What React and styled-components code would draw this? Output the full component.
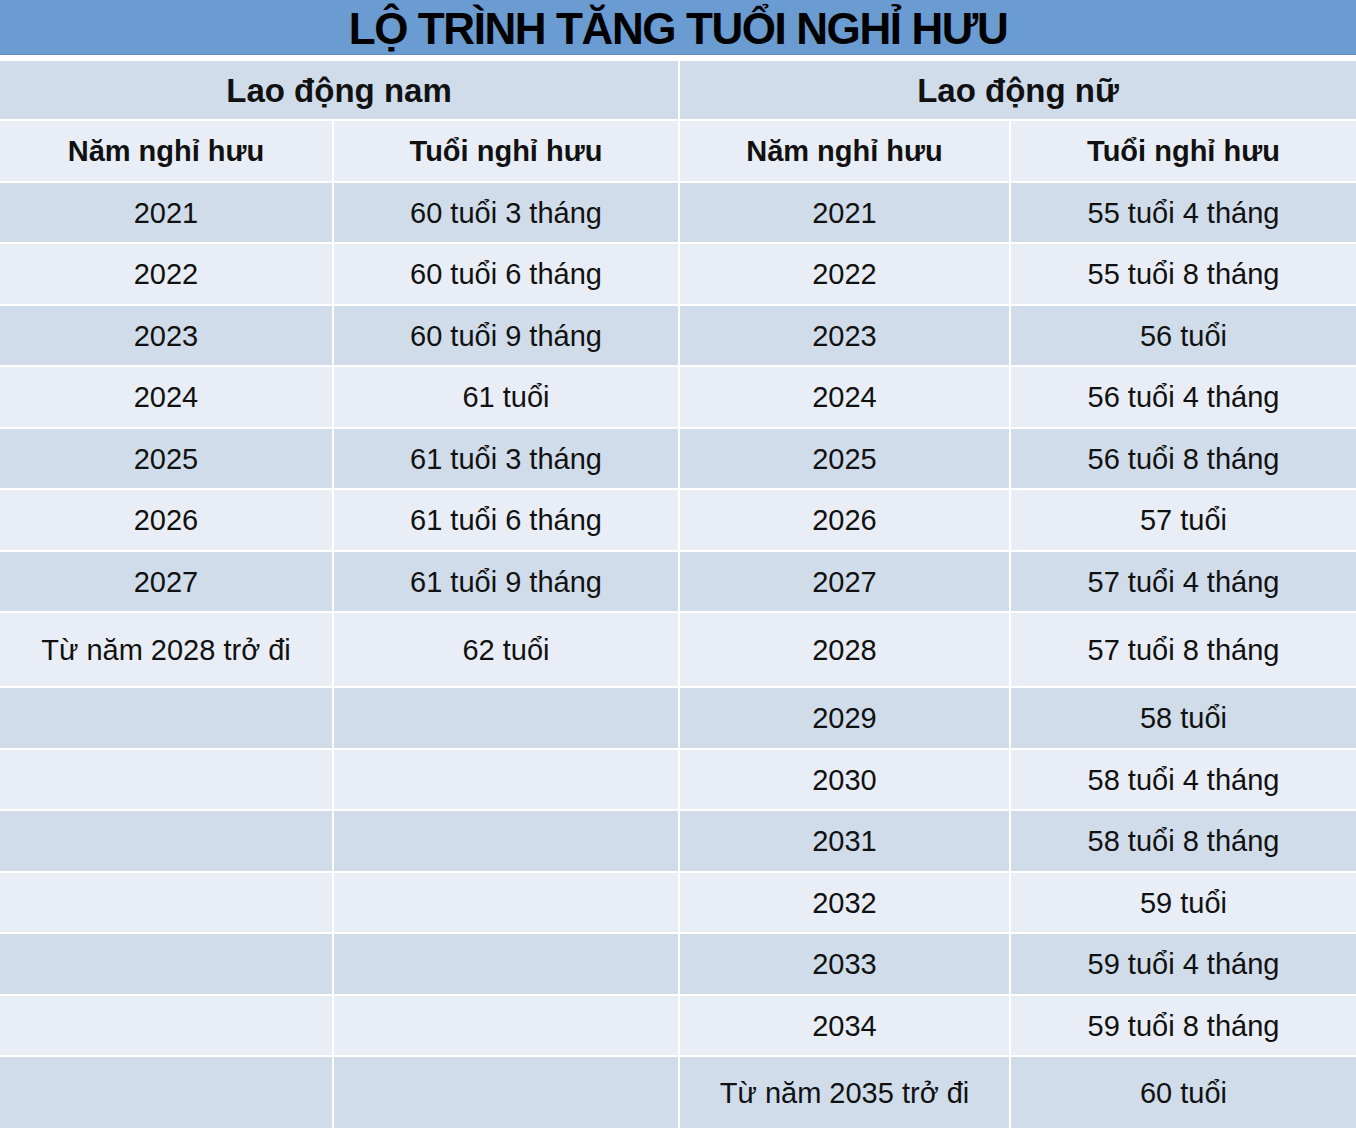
import React from "react";
import styled, { createGlobalStyle } from "styled-components";

const GlobalStyle = createGlobalStyle`
    html, body {
        margin: 0;
        padding: 0;
        background: #ffffff;
    }
    body {
        font-family: "Liberation Sans", Arial, sans-serif;
        color: #111;
    }
`;

const ScPage = styled.div`
    width: 1356px;
    height: 1128px;
    overflow: hidden;
    background: #ffffff;
`;

const ScTitle = styled.h1`
    margin: 0 0 6px;
    height: 55px;
    display: flex;
    align-items: center;
    justify-content: center;
    background: #6a9bd1;
    border-bottom: 1px solid #5f8fc4;
    box-sizing: border-box;
    font-size: 44px;
    font-weight: 700;
    letter-spacing: -1.4px;
    color: #000;
    padding-top: 3px;
`;

const ScGrid = styled.div`
    display: grid;
    grid-template-columns: 332px 344px 329px 345px;
    grid-template-rows: 58px repeat(8, 59.5px) 73px repeat(6, 59.5px) 71px;
    gap: 2px;
`;

const ScCell = styled.div`
    display: flex;
    align-items: center;
    justify-content: center;
    box-sizing: border-box;
    padding-top: 2px;
    background: ${({ $dark }) => ($dark ? "#d0dcea" : "#e9eef6")};
    grid-column: ${({ $span }) => ($span ? `span ${$span}` : "auto")};
    font-size: ${({ $size }) => $size || 29}px;
    font-weight: ${({ $bold }) => ($bold ? 700 : 400)};
    color: #111;
    white-space: nowrap;
`;

const men = [
    ["2021", "60 tuổi 3 tháng"],
    ["2022", "60 tuổi 6 tháng"],
    ["2023", "60 tuổi 9 tháng"],
    ["2024", "61 tuổi"],
    ["2025", "61 tuổi 3 tháng"],
    ["2026", "61 tuổi 6 tháng"],
    ["2027", "61 tuổi 9 tháng"],
    ["Từ năm 2028 trở đi", "62 tuổi"],
];

const women = [
    ["2021", "55 tuổi 4 tháng"],
    ["2022", "55 tuổi 8 tháng"],
    ["2023", "56 tuổi"],
    ["2024", "56 tuổi 4 tháng"],
    ["2025", "56 tuổi 8 tháng"],
    ["2026", "57 tuổi"],
    ["2027", "57 tuổi 4 tháng"],
    ["2028", "57 tuổi 8 tháng"],
    ["2029", "58 tuổi"],
    ["2030", "58 tuổi 4 tháng"],
    ["2031", "58 tuổi 8 tháng"],
    ["2032", "59 tuổi"],
    ["2033", "59 tuổi 4 tháng"],
    ["2034", "59 tuổi 8 tháng"],
    ["Từ năm 2035 trở đi", "60 tuổi"],
];

export default function App() {
    return (
        <ScPage>
            <GlobalStyle />
            <ScTitle>LỘ TRÌNH TĂNG TUỔI NGHỈ HƯU</ScTitle>
            <ScGrid>
                <ScCell $dark $span={2} $bold $size={33}>
                    Lao động nam
                </ScCell>
                <ScCell $dark $span={2} $bold $size={33}>
                    Lao động nữ
                </ScCell>

                <ScCell $bold>Năm nghỉ hưu</ScCell>
                <ScCell $bold>Tuổi nghỉ hưu</ScCell>
                <ScCell $bold>Năm nghỉ hưu</ScCell>
                <ScCell $bold>Tuổi nghỉ hưu</ScCell>

                {women.map((w, i) => {
                    const m = men[i] || ["", ""];
                    const dark = i % 2 === 0;
                    return (
                        <React.Fragment key={i}>
                            <ScCell $dark={dark}>{m[0]}</ScCell>
                            <ScCell $dark={dark}>{m[1]}</ScCell>
                            <ScCell $dark={dark}>{w[0]}</ScCell>
                            <ScCell $dark={dark}>{w[1]}</ScCell>
                        </React.Fragment>
                    );
                })}
            </ScGrid>
        </ScPage>
    );
}
